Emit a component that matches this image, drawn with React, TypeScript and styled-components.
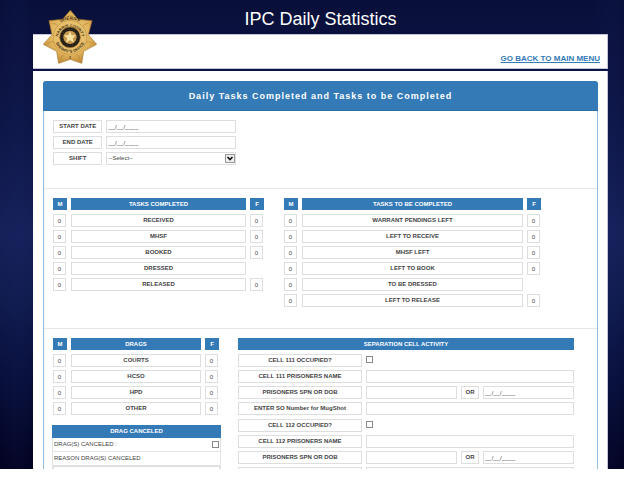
import React from "react";
import styled, { createGlobalStyle, css } from "styled-components";

const blue = "#337ab7";
const line = "#dedede";

const GlobalStyle = createGlobalStyle`
  * { box-sizing: border-box; }
  body { margin: 0; background: #fff; }
  body, input, select, textarea {
    font-family: "Liberation Sans", Arial, sans-serif;
    font-size: 6px;
    line-height: 11px;
    color: #444;
  }
`;

const Page = styled.div`
  height: 100vh;
  padding: 0 16px 12px 0;
`;

const Backdrop = styled.div`
  height: 100%;
  overflow: hidden;
  display: flex;
  flex-direction: column;
  padding: 0 16px 0 33px;
  background:
    linear-gradient(90deg, transparent 0, rgba(40, 60, 140, 0.06) 3%, transparent 5%, transparent 95%, rgba(40, 60, 150, 0.06) 98%, transparent),
    linear-gradient(180deg, #08103a 0%, #0c1240 12%, #0d1748 28%, #16205a 50%, #101b4e 64%, #08103c 80%, #030322 100%);
`;

const PageTitle = styled.h1`
  margin: 0;
  height: 34px;
  padding-top: 3px;
  font-size: 18px;
  line-height: 33px;
  font-weight: 400;
  text-align: center;
  color: #fff;
`;

const TopBar = styled.header`
  position: relative;
  flex: none;
  display: flex;
  justify-content: flex-end;
  height: 35px;
  padding: 19px 7px 0 0;
  margin-bottom: 2px;
  background: #fff;
  border: 1px solid #c3c4da;
  border-width: 1px 1px 1px 0;
`;

const Badge = styled.svg`
  position: absolute;
  left: 10px;
  top: -25px;
  width: 54px;
  height: 54px;
`;

const MenuLink = styled.a`
  font-size: 8px;
  line-height: 10px;
  font-weight: 700;
  color: ${blue};
`;

const Body = styled.main`
  flex: 1 0 auto;
  padding: 10px 9px 40px 10px;
  background: #fff;
  border-right: 1px solid #c3c4da;
`;

const Card = styled.section`
  border: 1px solid #94bbdd;
  border-radius: 3px;
`;

const CardTitle = styled.h2`
  margin: -1px -1px 0;
  padding: 1px 0 0;
  border-radius: 3px 3px 0 0;
  background: ${blue};
  border-bottom: 1px solid #2c6ea8;
  font-size: 9px;
  line-height: 28px;
  letter-spacing: 1px;
  text-align: center;
  color: #fff;
`;

const Filters = styled.form`
  display: grid;
  grid-template-columns: 50fr 131fr 361fr;
  gap: 3px 4px;
  padding: 9px 0 23px 9px;
  border-bottom: 1px solid #e6e6e6;
`;

const TaskSection = styled.div`
  display: grid;
  grid-template-columns: 211fr 257fr;
  gap: 20px;
  align-items: start;
  padding: 9px 56px 18px 9px;
  border-bottom: 1px solid #e6e6e6;
`;

const DetailSection = styled.div`
  display: grid;
  grid-template-columns: 169fr 336fr;
  gap: 17px;
  align-items: start;
  padding: 9px 23px 12px 8px;
`;

const boxed = css`
  height: 13px;
  border: 1px solid ${line};
  border-radius: 0;
  background: #fff;
`;

const FieldLabel = styled.label`
  ${boxed}
  display: block;
  font-weight: 700;
  text-align: center;
  white-space: nowrap;
`;

const RowLabel = styled(FieldLabel)`
  grid-column: 1;
`;

const Field = styled.input`
  ${boxed}
  display: block;
  width: 100%;
  min-width: 0;
  margin: 0;
  padding: 1px 1px 0;
  outline: none;
`;

const SelectWrap = styled.div`
  position: relative;
`;

const Select = styled.select`
  ${boxed}
  appearance: none;
  display: block;
  width: 100%;
  margin: 0;
  padding: 0 1px;
`;

const SelectArrow = styled.svg`
  position: absolute;
  right: 1px;
  top: 2px;
  width: 10px;
  height: 9px;
  pointer-events: none;
`;

const CountGrid = styled.table`
  display: block;
  thead, tbody { display: block; }
`;

const InsetCountGrid = styled(CountGrid)`
  padding: 0 2px 0 1px;
`;

const HeadRow = styled.tr`
  display: grid;
  grid-template-columns: 14px 1fr 14px;
  gap: 4px;
  margin-bottom: 4px;
`;

const CountRow = styled(HeadRow)`
  margin-bottom: 3px;
`;

const HeadCell = styled.th`
  padding: 0;
  height: 12px;
  line-height: 12px;
  background: ${blue};
  color: #fff;
`;

const NameCell = styled.th`
  ${boxed}
  padding: 0;
`;

const CountCell = styled.td`
  padding: 0;
`;

const Count = styled(Field)`
  width: 13px;
  padding: 0;
  text-align: center;
`;

const Banner = styled.h3`
  margin: 0;
  height: 12px;
  font-size: 6px;
  line-height: 12px;
  text-align: center;
  background: ${blue};
  color: #fff;
`;

const CellList = styled.div`
  display: grid;
  gap: 4px;
`;

const CellGroup = styled.div`
  display: grid;
  grid-template-columns: 124fr 208fr;
  gap: 3px 4px;
`;

const BlankLabel = styled.div`
  ${boxed}
`;

const SplitFields = styled.div`
  display: grid;
  grid-template-columns: 1fr 18px 1fr;
  gap: 4px;
`;

const Tick = styled.input`
  appearance: none;
  flex: none;
  width: 7px;
  height: 7px;
  margin: 2px 0;
  border: 1px solid #8a8a8a;
  background: #fff;
  &:checked { background: ${blue}; }
`;

const CancelBox = styled.div`
  margin-top: 10px;
  border: 1px solid #e3e3e3;
  border-width: 0 1px 1px;
  ${Banner} { margin: 0 -1px; height: 13px; line-height: 13px; }
`;

const CancelRow = styled.div`
  display: flex;
  justify-content: space-between;
  align-items: center;
  height: 14px;
  padding: 0 1px;
  border-bottom: 1px solid #e3e3e3;
`;

const Reason = styled.textarea`
  display: block;
  width: 100%;
  height: 30px;
  border: 1px solid ${line};
  resize: none;
`;

type Entry = { name: string; f?: boolean };

const completed: Entry[] = [
  { name: "RECEIVED" }, { name: "MHSF" }, { name: "BOOKED" },
  { name: "DRESSED", f: false }, { name: "RELEASED" },
];
const pending: Entry[] = [
  { name: "WARRANT PENDINGS LEFT" }, { name: "LEFT TO RECEIVE" }, { name: "MHSF LEFT" },
  { name: "LEFT TO BOOK" }, { name: "TO BE DRESSED", f: false }, { name: "LEFT TO RELEASE" },
];
const drags: Entry[] = [{ name: "COURTS" }, { name: "HCSO" }, { name: "HPD" }, { name: "OTHER" }];

function Counts({ title, rows, inset }: { title: string; rows: Entry[]; inset?: boolean }) {
  const Grid = inset ? InsetCountGrid : CountGrid;
  return (
    <Grid>
      <thead>
        <HeadRow>
          <HeadCell scope="col">M</HeadCell>
          <HeadCell scope="col">{title}</HeadCell>
          <HeadCell scope="col">F</HeadCell>
        </HeadRow>
      </thead>
      <tbody>
        {rows.map(({ name, f = true }) => (
          <CountRow key={name}>
            <CountCell><Count aria-label={`${name} M`} defaultValue="0" /></CountCell>
            <NameCell scope="row">{name}</NameCell>
            <CountCell>{f && <Count aria-label={`${name} F`} defaultValue="0" />}</CountCell>
          </CountRow>
        ))}
      </tbody>
    </Grid>
  );
}

function CellFields({ cell, mugShotLabel }: { cell: string; mugShotLabel?: string }) {
  const id = `cell${cell}`;
  return (
    <CellGroup>
      <RowLabel htmlFor={`${id}-occupied`}>CELL {cell} OCCUPIED?</RowLabel>
      <Tick type="checkbox" id={`${id}-occupied`} />
      <RowLabel htmlFor={`${id}-name`}>CELL {cell} PRISONERS NAME</RowLabel>
      <Field id={`${id}-name`} />
      <RowLabel htmlFor={`${id}-spn`}>PRISONERS SPN OR DOB</RowLabel>
      <SplitFields>
        <Field id={`${id}-spn`} />
        <FieldLabel htmlFor={`${id}-dob`}>OR</FieldLabel>
        <Field id={`${id}-dob`} defaultValue="__/__/____" />
      </SplitFields>
      {mugShotLabel ? <RowLabel htmlFor={`${id}-so`}>{mugShotLabel}</RowLabel> : <BlankLabel />}
      <Field id={`${id}-so`} aria-label={mugShotLabel ? undefined : "SO number"} />
    </CellGroup>
  );
}

function SheriffBadge() {
  return (
    <Badge viewBox="0 0 162 162" role="img" aria-label="Harris County Sheriff's Office">
      <defs>
        <radialGradient id="gold" cx="50%" cy="45%" r="60%">
          <stop offset="0" stopColor="#f3d78c" />
          <stop offset="0.65" stopColor="#dfb25a" />
          <stop offset="1" stopColor="#b9822f" />
        </radialGradient>
        <path id="arc-top" d="M46 42 A54 54 0 0 1 116 42" />
        <path id="arc-mid" d="M44 88 A37 37 0 0 1 118 88" />
        <path id="arc-low" d="M35 82 A46 46 0 0 0 127 82" />
      </defs>
      <path
        d="M82 1 L105 28 L147 32 L136 74 L161 103 L122 124 L116 160 L82 148 L47 160 L41 124 L1 103 L27 74 L18 32 L59 28 Z"
        fill="url(#gold)" stroke="#a8752b" strokeWidth="2" strokeLinejoin="round"
      />
      <g fill="none" stroke="#b98537" strokeWidth="2">
        <path d="M28 40 q12 0 18 10 M136 40 q-12 0 -18 10 M14 102 q12 -12 20 -4 M148 102 q-12 -12 -20 -4 M54 148 q0 -12 10 -14 M110 148 q0 -12 -10 -14 M72 20 q10 -8 20 0" />
        <circle cx="81" cy="82" r="50" />
      </g>
      <circle cx="81" cy="82" r="49" fill="#e6bf6c" />
      <g fill="#4b3413" fontFamily="Liberation Sans, Arial, sans-serif" fontWeight="700">
        <text fontSize="14"><textPath href="#arc-top" startOffset="50%" textAnchor="middle">SHERIFF</textPath></text>
        <text fontSize="12"><textPath href="#arc-mid" startOffset="50%" textAnchor="middle">HARRIS COUNTY</textPath></text>
        <text fontSize="12"><textPath href="#arc-low" startOffset="50%" textAnchor="middle">SHERIFF’S OFFICE</textPath></text>
        <text x="81" y="148" fontSize="12" textAnchor="middle">1</text>
      </g>
      <circle cx="81" cy="82" r="31" fill="#1f1b16" stroke="#a8752b" strokeWidth="2" />
      <circle cx="81" cy="82" r="24" fill="none" stroke="#6b5632" strokeWidth="3" strokeDasharray="3 6" />
      <circle cx="81" cy="82" r="20" fill="#c8994d" />
      <path d="M81 64 L86 76 L99 76 L89 85 L93 98 L81 90 L69 98 L73 85 L63 76 L76 76 Z" fill="#f8e3a4" />
    </Badge>
  );
}

export default function App() {
  return (
    <Page>
      <GlobalStyle />
      <Backdrop>
        <PageTitle>IPC Daily Statistics</PageTitle>
        <TopBar>
          <SheriffBadge />
          <MenuLink href="#menu">GO BACK TO MAIN MENU</MenuLink>
        </TopBar>
        <Body>
          <Card>
            <CardTitle>Daily Tasks Completed and Tasks to be Completed</CardTitle>
            <Filters>
              <RowLabel htmlFor="start">START DATE</RowLabel>
              <Field id="start" defaultValue="__/__/____" />
              <RowLabel htmlFor="end">END DATE</RowLabel>
              <Field id="end" defaultValue="__/__/____" />
              <RowLabel htmlFor="shift">SHIFT</RowLabel>
              <SelectWrap>
                <Select id="shift"><option>--Select--</option></Select>
                <SelectArrow viewBox="0 0 10 9">
                  <rect x="0.5" y="0.5" width="9" height="8" fill="#eee" stroke="#999" />
                  <path d="M2.5 3 L5 5.5 L7.5 3" fill="none" stroke="#111" strokeWidth="1.6" />
                </SelectArrow>
              </SelectWrap>
            </Filters>
            <TaskSection>
              <Counts title="TASKS COMPLETED" rows={completed} />
              <Counts title="TASKS TO BE COMPLETED" rows={pending} />
            </TaskSection>
            <DetailSection>
              <div>
                <Counts title="DRAGS" rows={drags} inset />
                <CancelBox>
                  <Banner>DRAG CANCELED</Banner>
                  <CancelRow>
                    <label htmlFor="canceled">DRAG(S) CANCELED :</label>
                    <Tick type="checkbox" id="canceled" />
                  </CancelRow>
                  <CancelRow>
                    <label htmlFor="reason">REASON DRAG(S) CANCELED</label>
                  </CancelRow>
                  <Reason id="reason" />
                </CancelBox>
              </div>
              <CellList>
                <Banner>SEPARATION CELL ACTIVITY</Banner>
                <CellFields cell="111" mugShotLabel="ENTER SO Number for MugShot" />
                <CellFields cell="112" />
              </CellList>
            </DetailSection>
          </Card>
        </Body>
      </Backdrop>
    </Page>
  );
}
